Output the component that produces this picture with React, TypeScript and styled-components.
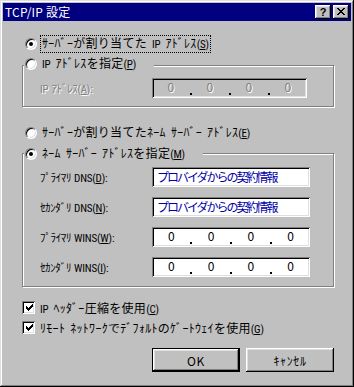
import React from "react";
import styled, { createGlobalStyle } from "styled-components";

const GlobalStyle = createGlobalStyle`
  html, body {
    margin: 0;
    padding: 0;
    background: #c0c0c0;
  }
  body {
    font-family: "Noto Sans CJK JP", "Noto Sans", sans-serif;
    font-size: 12px;
    color: #000;
  }
`;

const CHECK = [
  "......#",
  ".....##",
  "#...###",
  "##.###.",
  "#####..",
  ".###...",
  "..#....",
];

const CLOSE = [
  "##....##",
  ".##..##.",
  "..####..",
  "...##...",
  "..####..",
  ".##..##.",
  "##....##",
];

function PixelIcon({ rows, color = "#000" }: { rows: string[]; color?: string }) {
  const w = rows[0].length;
  const h = rows.length;
  return (
    <svg width={w} height={h} viewBox={`0 0 ${w} ${h}`} shapeRendering="crispEdges">
      {rows.map((r, y) =>
        r.split("").map((c, x) =>
          c === "#" ? <rect key={`${x}-${y}`} x={x} y={y} width={1} height={1} fill={color} /> : null
        )
      )}
    </svg>
  );
}

const Window = styled.div`
  box-sizing: border-box;
  width: 354px;
  height: 387px;
  padding: 3px;
  background: #c0c0c0;
  box-shadow: inset -1px -1px #000, inset 1px 1px #dfdfdf, inset -2px -2px #808080, inset 2px 2px #fff;
  display: flex;
  flex-direction: column;
`;

const TitleBar = styled.div`
  height: 18px;
  background: #000080;
  color: #fff;
  display: flex;
  align-items: center;
  padding: 0 2px;
`;

const Title = styled.div`
  flex: 1;
  line-height: 18px;
  letter-spacing: 0.2px;
`;

const CaptionButtons = styled.div`
  display: flex;
  gap: 2px;
`;

const CaptionButton = styled.div`
  box-sizing: border-box;
  width: 16px;
  height: 14px;
  background: #c0c0c0;
  box-shadow: inset -1px -1px #000, inset 1px 1px #fff, inset -2px -2px #808080, inset 2px 2px #dfdfdf;
  display: flex;
  align-items: center;
  justify-content: center;
  color: #000;
  font-family: "Liberation Sans", sans-serif;
  font-weight: bold;
  font-size: 11px;
  line-height: 14px;
  padding-bottom: 1px;
`;

const Body = styled.div`
  display: flex;
  flex-direction: column;
  padding: 0 17px 0 19px;
  letter-spacing: 0.3px;
  word-spacing: 2px;
`;

const Latin = styled.span`
  font-family: "Liberation Sans Narrow", "Roboto Condensed", "Roboto", "Liberation Sans", sans-serif;
  font-size: 11px;
  letter-spacing: -0.2px;
`;

function Key({ k, colon }: { k: string; colon?: boolean }) {
  return (
    <Latin>
      (<u>{k}</u>){colon ? ":" : ""}
    </Latin>
  );
}

const RadioRow = styled.div<{ $top: number }>`
  display: flex;
  align-items: center;
  height: 16px;
  margin-top: ${(p) => p.$top}px;
  padding-left: 3px;
`;

const RadioMark = styled.span<{ $checked?: boolean }>`
  box-sizing: border-box;
  flex: none;
  width: 12px;
  height: 12px;
  border-radius: 50%;
  background: #fff;
  border: 1px solid;
  border-color: #808080 #fff #fff #808080;
  box-shadow: inset 1px 1px #000, inset -1px -1px #dfdfdf;
  display: flex;
  align-items: center;
  justify-content: center;
  &::after {
    content: "";
    width: 4px;
    height: 4px;
    border-radius: 50%;
    background: ${(p) => (p.$checked ? "#000" : "transparent")};
  }
`;

const OptionText = styled.span<{ $focus?: boolean }>`
  margin-left: 4px;
  padding: 0 1px;
  line-height: 14px;
  white-space: nowrap;
  outline: ${(p) => (p.$focus ? "1px dotted #000" : "none")};
`;

const GroupBox = styled.div<{ $top: number; $bottom: number }>`
  margin-top: ${(p) => p.$top}px;
  padding-bottom: ${(p) => p.$bottom}px;
  border: 1px solid #808080;
  box-shadow: inset 1px 1px #fff, 1px 1px #fff;
  display: flex;
  flex-direction: column;
`;

const Legend = styled.div<{ $lift: number }>`
  display: flex;
  align-items: center;
  width: fit-content;
  height: 16px;
  margin: -${(p) => p.$lift}px 0 0 1px;
  padding: 0 17px 0 1px;
  background: #c0c0c0;
`;

const FieldList = styled.div<{ $top: number }>`
  display: flex;
  flex-direction: column;
  gap: 10px;
  margin-top: ${(p) => p.$top}px;
`;

const FieldRow = styled.div`
  display: flex;
  align-items: center;
  height: 20px;
  padding-left: 17px;
`;

const FieldLabel = styled.span<{ $disabled?: boolean }>`
  width: 112px;
  flex: none;
  white-space: nowrap;
  font-size: 11px;
  letter-spacing: -0.4px;
  word-spacing: 1px;
  color: ${(p) => (p.$disabled ? "#808080" : "#000")};
  text-shadow: ${(p) => (p.$disabled ? "1px 1px #fff" : "none")};
`;

const Sunken = styled.div<{ $width: number; $disabled?: boolean }>`
  box-sizing: border-box;
  width: ${(p) => p.$width}px;
  height: 20px;
  padding: 2px;
  background: ${(p) => (p.$disabled ? "#c0c0c0" : "#fff")};
  box-shadow: inset 1px 1px #808080, inset -1px -1px #fff, inset 2px 2px #000, inset -2px -2px #dfdfdf;
`;

const TextValue = styled.div`
  padding-left: 3px;
  line-height: 16px;
  color: #0000a8;
  white-space: nowrap;
  letter-spacing: -2px;
`;

const IpRow = styled.div`
  display: flex;
  height: 16px;
`;

const IpPart = styled.span<{ $disabled?: boolean }>`
  flex: 1;
  text-align: center;
  line-height: 13px;
  color: ${(p) => (p.$disabled ? "#808080" : "#000")};
  text-shadow: ${(p) => (p.$disabled ? "1px 1px #fff" : "none")};
`;

const IpDot = styled.span`
  width: 5px;
  display: flex;
  align-items: flex-end;
  justify-content: center;
  padding-bottom: 1px;
  &::after {
    content: "";
    width: 2px;
    height: 2px;
    background: #000;
  }
`;

const CheckRow = styled.div<{ $top: number }>`
  display: flex;
  align-items: center;
  height: 16px;
  margin-top: ${(p) => p.$top}px;
`;

const CheckMark = styled.span`
  box-sizing: border-box;
  flex: none;
  width: 13px;
  height: 13px;
  background: #fff;
  box-shadow: inset 1px 1px #808080, inset -1px -1px #fff, inset 2px 2px #000, inset -2px -2px #dfdfdf;
  display: flex;
  align-items: center;
  justify-content: center;
  padding: 1px 0 0 1px;
`;

const CheckText = styled.span`
  margin-left: 5px;
  white-space: nowrap;
`;

const ButtonRow = styled.div`
  display: flex;
  justify-content: flex-end;
  gap: 6px;
  margin-top: 13px;
`;

const PushButton = styled.button<{ $default?: boolean }>`
  box-sizing: border-box;
  width: 88px;
  height: 24px;
  padding: 0;
  border: ${(p) => (p.$default ? "1px solid #000" : "none")};
  background: #c0c0c0;
  font: inherit;
  letter-spacing: 0.6px;
  color: #000;
  box-shadow: inset -1px -1px #000, inset 1px 1px #fff, inset -2px -2px #808080, inset 2px 2px #dfdfdf;
`;

function Ip({ disabled, width }: { disabled?: boolean; width: number }) {
  const parts = ["0", "0", "0", "0"];
  return (
    <Sunken $width={width} $disabled={disabled}>
      <IpRow>
        {parts.map((v, i) => (
          <React.Fragment key={i}>
            {i > 0 && <IpDot />}
            <IpPart $disabled={disabled}>{v}</IpPart>
          </React.Fragment>
        ))}
      </IpRow>
    </Sunken>
  );
}

export default function App() {
  return (
    <>
      <GlobalStyle />
      <Window>
        <TitleBar>
          <Title>TCP/IP 設定</Title>
          <CaptionButtons>
            <CaptionButton>?</CaptionButton>
            <CaptionButton>
              <PixelIcon rows={CLOSE} />
            </CaptionButton>
          </CaptionButtons>
        </TitleBar>
        <Body>
          <RadioRow $top={15}>
            <RadioMark $checked />
            <OptionText $focus>
              ｻｰﾊﾞｰが割り当てた <Latin>IP</Latin> ｱﾄﾞﾚｽ<Key k="S" />
            </OptionText>
          </RadioRow>

          <GroupBox $top={13} $bottom={8}>
            <Legend $lift={10}>
              <RadioMark />
              <OptionText>
                <Latin>IP</Latin> ｱﾄﾞﾚｽを指定<Key k="P" />
              </OptionText>
            </Legend>
            <FieldList $top={6}>
              <FieldRow>
                <FieldLabel $disabled>
                  <Latin>IP</Latin> ｱﾄﾞﾚｽ<Key k="A" colon />
                </FieldLabel>
                <Ip disabled width={155} />
              </FieldRow>
            </FieldList>
          </GroupBox>

          <RadioRow $top={18}>
            <RadioMark />
            <OptionText>
              ｻｰﾊﾞｰが割り当てたﾈｰﾑ ｻｰﾊﾞｰ ｱﾄﾞﾚｽ<Key k="E" />
            </OptionText>
          </RadioRow>

          <GroupBox $top={12} $bottom={9}>
            <Legend $lift={8}>
              <RadioMark $checked />
              <OptionText>
                ﾈｰﾑ ｻｰﾊﾞｰ ｱﾄﾞﾚｽを指定<Key k="M" />
              </OptionText>
            </Legend>
            <FieldList $top={5}>
              <FieldRow>
                <FieldLabel>
                  ﾌﾟﾗｲﾏﾘ <Latin>DNS</Latin>
                  <Key k="D" colon />
                </FieldLabel>
                <Sunken $width={158}>
                  <TextValue>プロバイダからの契約情報</TextValue>
                </Sunken>
              </FieldRow>
              <FieldRow>
                <FieldLabel>
                  ｾｶﾝﾀﾞﾘ <Latin>DNS</Latin>
                  <Key k="N" colon />
                </FieldLabel>
                <Sunken $width={158}>
                  <TextValue>プロバイダからの契約情報</TextValue>
                </Sunken>
              </FieldRow>
              <FieldRow>
                <FieldLabel>
                  ﾌﾟﾗｲﾏﾘ <Latin>WINS</Latin>
                  <Key k="W" colon />
                </FieldLabel>
                <Ip width={158} />
              </FieldRow>
              <FieldRow>
                <FieldLabel>
                  ｾｶﾝﾀﾞﾘ <Latin>WINS</Latin>
                  <Key k="I" colon />
                </FieldLabel>
                <Ip width={158} />
              </FieldRow>
            </FieldList>
          </GroupBox>

          <CheckRow $top={12}>
            <CheckMark>
              <PixelIcon rows={CHECK} />
            </CheckMark>
            <CheckText>
              <Latin>IP</Latin> ﾍｯﾀﾞｰ圧縮を使用<Key k="C" />
            </CheckText>
          </CheckRow>
          <CheckRow $top={4}>
            <CheckMark>
              <PixelIcon rows={CHECK} />
            </CheckMark>
            <CheckText>
              ﾘﾓｰﾄ ﾈｯﾄﾜｰｸでﾃﾞﾌｫﾙﾄのｹﾞｰﾄｳｪｲを使用<Key k="G" />
            </CheckText>
          </CheckRow>

          <ButtonRow>
            <PushButton $default>OK</PushButton>
            <PushButton>ｷｬﾝｾﾙ</PushButton>
          </ButtonRow>
        </Body>
      </Window>
    </>
  );
}
